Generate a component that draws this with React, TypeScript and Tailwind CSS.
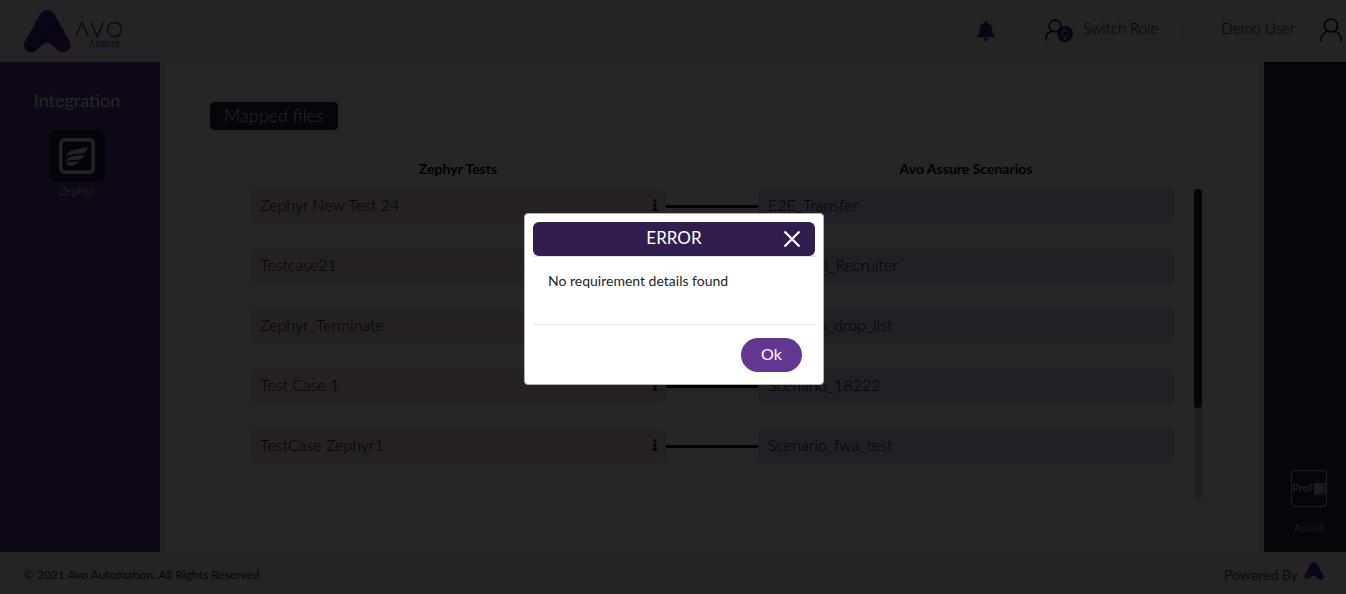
import React from "react";
import { FaBell, FaInfo } from "react-icons/fa";

const rows = [
  { test: "Zephyr New Test 24", scenario: "E2E_Transfer" },
  { test: "Testcase21", scenario: "Financial_Recruiter" },
  { test: "Zephyr_Terminate", scenario: "Scenario_drop_list" },
  { test: "Test Case 1", scenario: "Scenario_18222" },
  { test: "TestCase Zephyr1", scenario: "Scenario_fwa_test" },
];

const markPath =
  "M16 4.5C19-1.5 27-1.5 30.500 4.500L45.500 31C50 39 41 45 34.500 40.800L27 34.500C24.500 32 21.500 32 19 34.500L11.500 40.800C5 45-3 39 1 31Z";

function BrandMark() {
  return (
    <svg viewBox="0 0 47 43" className="h-[43px] w-[47px]" aria-hidden="true">
      <defs>
        <linearGradient id="brand" x1="0" y1="0.2" x2="1" y2="0.9">
          <stop offset="0" stopColor="#4b30a8" />
          <stop offset="0.5" stopColor="#40189a" />
          <stop offset="1" stopColor="#78108c" />
        </linearGradient>
      </defs>
      <path d={markPath} fill="url(#brand)" />
    </svg>
  );
}

function PoweredMark() {
  return (
    <svg viewBox="0 0 47 43" className="mb-1 ml-1.5 h-[18px] w-5" aria-hidden="true">
      <defs>
        <linearGradient id="powered" x1="0" y1="1" x2="0.7" y2="0.4">
          <stop offset="0.1" stopColor="#f0501c" />
          <stop offset="0.5" stopColor="#5a2490" />
          <stop offset="1" stopColor="#4426a8" />
        </linearGradient>
      </defs>
      <path d={markPath} fill="url(#powered)" />
    </svg>
  );
}

function Person({ className }: { className: string }) {
  return (
    <svg viewBox="0 0 22 24" className={className} fill="none" stroke="currentColor" strokeWidth="1.600" aria-hidden="true">
      <circle cx="11" cy="7.500" r="6.500" />
      <path d="M1 23.500V22C1 17 4 13.800 8 13.300M14 13.300C18 13.800 21 17 21 22V23.500" />
    </svg>
  );
}

function Header() {
  return (
    <header className="flex h-[62px] shrink-0 items-center bg-[#f0f0f0] pl-6">
      <BrandMark />
      <svg viewBox="0 0 48 28" className="mt-2 ml-1 h-7 w-12" fill="none" stroke="#4a1b94" strokeWidth="1.400" role="img" aria-label="Avo Assure">
        <path d="M.8 15.500L7 1.500L13.200 15.500M16 1.500L22.200 15.500L28.400 1.500" />
        <circle cx="39.500" cy="8.500" r="7" />
        <text x="14" y="26" fontFamily="Inter, sans-serif" fontSize="9.500" fill="#4a1b94" stroke="none">Λssure</text>
      </svg>
      <div className="ml-auto flex items-center text-[15px] font-light text-black">
        <button type="button" aria-label="Notifications" className="mr-[49px] text-[#4a2085]">
          <FaBell className="size-5" />
        </button>
        <button type="button" className="flex items-center pb-[3px]">
          <span className="relative mr-[10px] block h-6 w-7">
            <Person className="h-6 w-5" />
            <span className="absolute right-0 bottom-0 flex size-4 items-center justify-center rounded-full bg-[#4a2085] text-[#d8c8ee]">
              <svg viewBox="0 0 14 14" className="size-3.5" fill="none" stroke="currentColor" aria-hidden="true">
                <path d="M2.500 7.500L8 2M5 2H8V5M6 12L11.500 6.500M6 9V12H9" />
              </svg>
            </span>
          </span>
          <span className="pb-0.5">Switch Role</span>
        </button>
        <span className="ml-6 h-6 w-px bg-[#dcdcdc]" />
        <button type="button" className="ml-[38px] flex items-center pb-[3px]">
          <span className="pb-0.5">Demo User</span>
          <Person className="mr-1 ml-[25px] h-6 w-[22px]" />
        </button>
      </div>
    </header>
  );
}

function IntegrationPanel() {
  return (
    <aside className="flex w-40 shrink-0 flex-col items-center bg-[#633691] pt-7 pr-1.5 text-white">
      <h2 className="pb-0.5 text-lg leading-5">Integration</h2>
      <button type="button" className="mt-[18px] flex flex-col items-center">
        <span className="flex h-[52px] w-14 items-center justify-center rounded-md bg-[#2f1a4a]">
          <svg viewBox="0 0 36 36" className="size-9" aria-hidden="true">
            <rect x="1.800" y="1.800" width="32.400" height="32.400" rx="4" fill="none" stroke="#e8e8e8" strokeWidth="3.600" />
            <path
              d="M7 18.500C9 11 17 12 22 10.500C25 10 27 9.500 29 8C28.500 12 26 15 22 15.500C16 16 11 16 7 18.500ZM7 23.500C9 17 15 18.500 19 17.500C22 17.300 24 17 25.500 16C25 20 22 21.500 18.500 21.800C14 22 10 21.800 7 23.500ZM7 24.800C11 23.500 15 23.800 19.500 23.500C17 28 9 30 7 24.800Z"
              fill="#e8e8e8"
            />
          </svg>
        </span>
        <span className="text-xs leading-[18px] font-light">Zephyr</span>
      </button>
    </aside>
  );
}

function MappedFiles() {
  return (
    <main className="mx-[5px] flex min-w-0 flex-1 flex-col bg-white pt-10 pr-[57px] pb-[50px] pl-[45px] text-black">
      <h1 className="self-start rounded bg-[#311d4e] px-3.5 pb-0.5 text-lg leading-[26px] font-light text-white">Mapped files</h1>
      <section className="flex flex-1 flex-col pt-[30px] pl-10">
        <div className="grid grid-cols-[1fr_92px_1fr] pr-7 text-center text-sm leading-[18px] font-bold">
          <h3>Zephyr Tests</h3>
          <h3 className="col-start-3">Avo Assure Scenarios</h3>
        </div>
        <div className="mt-[11px] flex flex-1 gap-5">
          <ul className="flex flex-1 flex-col gap-[26px] text-base font-light">
            {rows.map((row) => (
              <li key={row.test} className="grid h-[34px] grid-cols-[1fr_92px_1fr] items-center">
                <div className="flex h-full items-center justify-between rounded bg-[#f6d8e4] pr-[5px] pb-0.5 pl-2.5">
                  {row.test}
                  <button type="button" aria-label={`Details of ${row.test}`} className="text-[#311d4e]">
                    <FaInfo className="size-3" />
                  </button>
                </div>
                <span className="h-[3px] bg-black" />
                <div className="flex h-full items-center rounded bg-[#e3d2fa] px-2.5 pb-0.5">{row.scenario}</div>
              </li>
            ))}
          </ul>
          <div className="w-2 rounded bg-[#d8d8d8]">
            <div className="h-[70%] rounded bg-[#311d4e]" />
          </div>
        </div>
      </section>
    </main>
  );
}

function AssistPanel() {
  return (
    <aside className="flex w-[82px] shrink-0 flex-col items-center justify-end bg-[#311d4e] pb-[15px] pl-2 text-white">
      <button type="button" className="flex flex-col items-center text-xs font-light">
        <span className="flex h-[37px] w-9 items-center justify-center rounded border border-[#d8d8d8] text-[11px] font-normal">
          Prof
          <svg viewBox="0 0 12 12" className="ml-px size-3" aria-hidden="true">
            <rect width="12" height="12" rx="1" fill="#b8b8b8" />
            <path d="M10 1.500V8.500C10 10 9 10.500 8 10.500H5.500M2.500 10.500H3.500" fill="none" stroke="#311d4e" />
          </svg>
        </span>
        <span className="mt-3 leading-[18px]">Assist</span>
      </button>
    </aside>
  );
}

function Footer() {
  return (
    <footer className="flex h-[42px] shrink-0 items-center justify-between bg-[#f0f0f0] pr-[22px] pl-6">
      <p className="pt-1 text-xs text-[#311d4e]">© 2021 Avo Automation. All Rights Reserved</p>
      <p className="flex items-center text-sm text-[#5a4878]">
        <span className="pt-1">Powered By</span>
        <PoweredMark />
      </p>
    </footer>
  );
}

function ErrorDialog() {
  return (
    <div className="fixed inset-0 flex items-center justify-center bg-black/85 pt-1 pl-0.5">
      <div role="dialog" aria-modal="true" aria-labelledby="error-title" className="w-[300px] rounded border border-[#b0b0b0] bg-white p-2">
        <div className="border-b border-[#dee2e6]">
          <div className="relative flex h-[34px] items-center justify-center rounded-md bg-[#311d4e] text-white">
            <h2 id="error-title" className="pb-0.5 text-[17px]">ERROR</h2>
            <button type="button" aria-label="Close" className="absolute right-3.5">
              <svg viewBox="0 0 18 18" className="size-[18px]" fill="none" stroke="currentColor" strokeWidth="2.200" aria-hidden="true">
                <path d="M1.500 1.500L16.500 16.500M16.500 1.500L1.500 16.500" />
              </svg>
            </button>
          </div>
        </div>
        <p className="h-[67px] px-[15px] pt-3.5 text-sm text-[#212529]">No requirement details found</p>
        <div className="flex justify-end border-t border-[#dee2e6] pt-[13px] pr-[13px] pb-1">
          <button type="button" className="h-[34px] w-[61px] rounded-full bg-[#633691] pb-0.5 text-base text-white">
            Ok
          </button>
        </div>
      </div>
    </div>
  );
}

export default function App() {
  return (
    <div className="flex min-h-screen flex-col bg-[#f0f0f0] font-['Lato',sans-serif]">
      <Header />
      <div className="flex flex-1">
        <IntegrationPanel />
        <MappedFiles />
        <AssistPanel />
      </div>
      <Footer />
      <ErrorDialog />
    </div>
  );
}
